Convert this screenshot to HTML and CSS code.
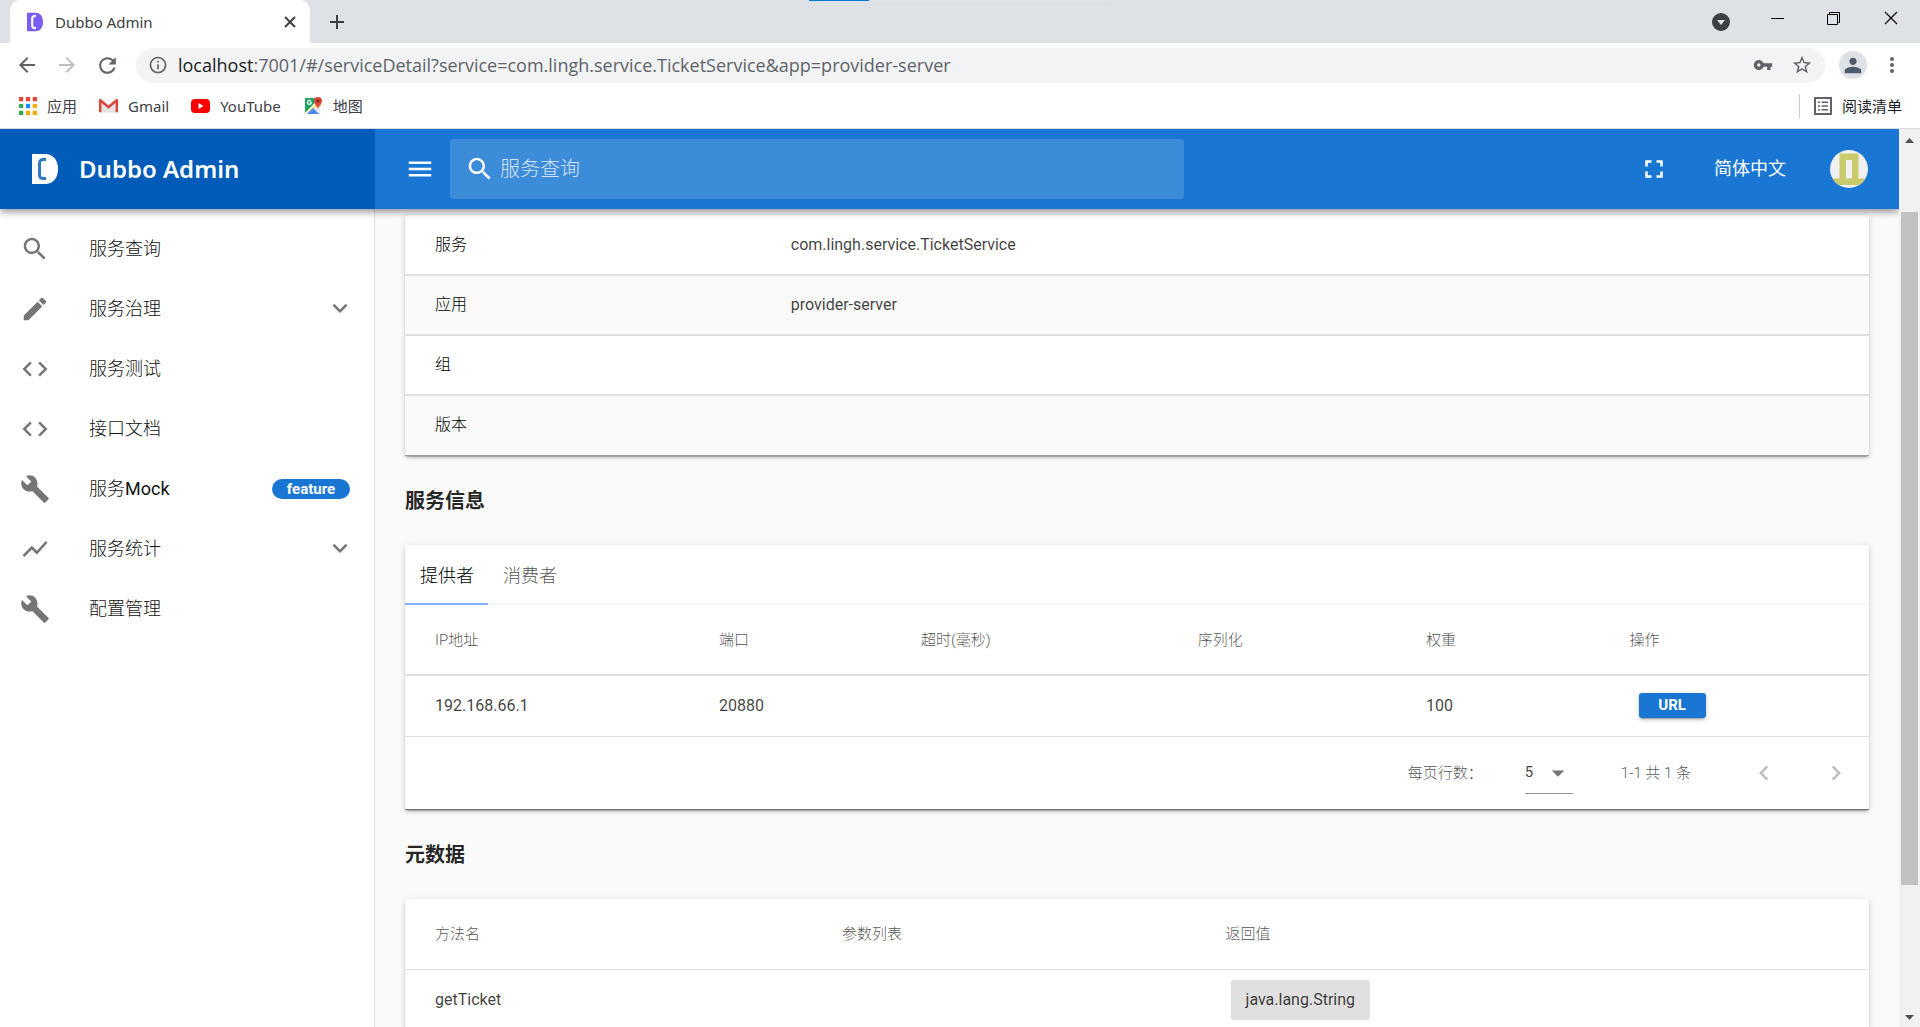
FILE: index.html
```html
<!DOCTYPE html>
<html lang="zh-CN">
<head>
<meta charset="utf-8">
<title>Dubbo Admin</title>
<link rel="stylesheet" href="styles.css">
</head>
<body>
<svg class="sprite" aria-hidden="true">
  <symbol id="i-search" viewBox="0 0 24 24"><path d="M15.5 14h-.79l-.28-.27C15.41 12.59 16 11.11 16 9.5 16 5.91 13.09 3 9.5 3S3 5.91 3 9.5 5.91 16 9.5 16c1.61 0 3.09-.59 4.23-1.57l.27.28v.79l5 4.99L20.49 19l-4.99-5zm-6 0C7.01 14 5 11.99 5 9.5S7.01 5 9.5 5 14 7.01 14 9.5 11.99 14 9.5 14z"/></symbol>
  <symbol id="i-edit" viewBox="0 0 24 24"><path d="M3 17.25V21h3.75L17.81 9.94l-3.75-3.75L3 17.25zM20.71 7.04c.39-.39.39-1.02 0-1.41l-2.34-2.34c-.39-.39-1.02-.39-1.41 0l-1.83 1.83 3.75 3.75 1.83-1.83z"/></symbol>
  <symbol id="i-code" viewBox="0 0 24 24"><path d="M9.4 16.6L4.8 12l4.6-4.6L8 6l-6 6 6 6 1.4-1.4zm5.2 0l4.6-4.6-4.6-4.6L16 6l6 6-6 6-1.4-1.4z"/></symbol>
  <symbol id="i-build" viewBox="0 0 24 24"><path d="M22.7 19l-9.1-9.1c.9-2.3.4-5-1.5-6.9-2-2-5-2.4-7.4-1.3L9 6 6 9 1.6 4.7C.4 7.1.9 10.1 2.9 12.1c1.9 1.9 4.6 2.4 6.9 1.5l9.1 9.1c.4.4 1 .4 1.4 0l2.3-2.3c.5-.4.5-1.1.1-1.4z"/></symbol>
  <symbol id="i-chart" viewBox="0 0 24 24"><path d="M3.5 18.49l6-6.01 4 4L22 6.92l-1.41-1.41-7.09 7.97-4-4L2 16.99z"/></symbol>
  <symbol id="i-menu" viewBox="0 0 24 24"><path d="M3 18h18v-2H3v2zm0-5h18v-2H3v2zm0-7v2h18V6H3z"/></symbol>
  <symbol id="i-down" viewBox="0 0 24 24"><path d="M7.41 7.84L12 12.42l4.59-4.58L18 9.25l-6 6-6-6z"/></symbol>
  <symbol id="i-left" viewBox="0 0 24 24"><path d="M15.41 7.41L14 6l-6 6 6 6 1.41-1.41L10.83 12z"/></symbol>
  <symbol id="i-right" viewBox="0 0 24 24"><path d="M10 6L8.59 7.41 13.17 12l-4.58 4.59L10 18l6-6z"/></symbol>
  <symbol id="i-full" viewBox="0 0 24 24"><path d="M7 14H5v5h5v-2H7v-3zm-2-4h2V7h3V5H5v5zm12 7h-3v2h5v-5h-2v3zM14 5v2h3v3h2V5h-5z"/></symbol>
  <symbol id="i-drop" viewBox="0 0 24 24"><path d="M7 10l5 5 5-5z"/></symbol>
</svg>

<div class="tabstrip">
  <div class="progress"></div>
  <div class="tab">
    <svg class="favicon" width="16" height="20" viewBox="0 0 26 30"><path fill="#7b5cf5" d="M0 0h14c8 0 12 7 12 15s-4 15-12 15H0z"/><path fill="none" stroke="#fff" stroke-width="3.5" d="M14.500 5c-4 0-6 1-6 4v12c0 3 2 4 6 4"/></svg>
    <span class="tab-title">Dubbo Admin</span>
    <button class="bare" aria-label="关闭标签页"><svg width="20" height="20" viewBox="0 0 20 20"><path stroke="#3c4043" stroke-width="2" d="M5 5l10 10M15 5L5 15"/></svg></button>
  </div>
  <button class="bare newtab" aria-label="新标签页"><svg width="20" height="20" viewBox="0 0 20 20"><path stroke="#3c4043" stroke-width="2" d="M10 3v14M3 10h14"/></svg></button>
  <div class="winctl">
    <button class="bare wc-list" aria-label="搜索标签页"><svg width="20" height="20" viewBox="0 0 20 20"><circle cx="11" cy="10" r="9" fill="#3c4043"/><path fill="#dee1e6" d="M7 8h8l-4 5z"/></svg></button>
    <button class="bare" aria-label="最小化"><svg width="20" height="20" viewBox="0 0 20 20"><path fill="#000" d="M4 9h13v1H4z"/></svg></button>
    <button class="bare" aria-label="还原"><svg width="20" height="20" viewBox="0 0 20 20"><path fill="none" stroke="#000" d="M3.500 5.500h10v10h-10zM5.500 5.500v-2h10v10h-2"/></svg></button>
    <button class="bare" aria-label="关闭"><svg width="20" height="20" viewBox="0 0 20 20"><path stroke="#000" stroke-width="1.200" d="M4 3l12 12M16 3L4 15"/></svg></button>
  </div>
</div>

<div class="toolbar">
  <button class="bare" aria-label="后退"><svg width="24" height="24" viewBox="0 0 24 24" fill="#5f6368"><path d="M20 11H7.83l5.59-5.59L12 4l-8 8 8 8 1.410-1.410L7.830 13H20z"/></svg></button>
  <button class="bare" aria-label="前进"><svg width="24" height="24" viewBox="0 0 24 24" fill="#bdc0c3"><path d="M4 11h12.170l-5.590-5.590L12 4l8 8-8 8-1.410-1.410L16.170 13H4z"/></svg></button>
  <button class="bare" aria-label="重新加载"><svg width="25" height="25" viewBox="0 0 24 24" fill="#5f6368"><path d="M17.650 6.350C16.200 4.900 14.210 4 12 4c-4.420 0-7.990 3.580-7.990 8s3.570 8 7.990 8c3.730 0 6.840-2.550 7.730-6h-2.080c-.82 2.330-3.040 4-5.650 4-3.310 0-6-2.690-6-6s2.690-6 6-6c1.660 0 3.140.69 4.220 1.780L13 11h7V4z"/></svg></button>
  <div class="omnibox">
    <svg width="20" height="20" viewBox="0 0 24 24" fill="#5f6368"><path d="M11 7h2v2h-2zm0 4h2v6h-2zm1-9C6.480 2 2 6.480 2 12s4.480 10 10 10 10-4.480 10-10S17.520 2 12 2zm0 18c-4.410 0-8-3.590-8-8s3.590-8 8-8 8 3.590 8 8-3.590 8-8 8z"/></svg>
    <span class="url"><span class="host">localhost</span>:7001/#/serviceDetail?service=com.lingh.service.TicketService&amp;app=provider-server</span>
    <svg width="20" height="20" viewBox="0 0 24 24" fill="#5f6368"><path d="M12.650 10C11.830 7.670 9.610 6 7 6c-3.310 0-6 2.690-6 6s2.690 6 6 6c2.610 0 4.830-1.670 5.650-4H17v4h4v-4h2v-4zM7 14c-1.100 0-2-.9-2-2s.9-2 2-2 2 .9 2 2-.9 2-2 2z"/></svg>
    <svg width="22" height="22" viewBox="0 0 24 24" fill="#5f6368"><path d="M22 9.240l-7.190-.62L12 2 9.190 8.630 2 9.240l5.460 4.730L5.820 21 12 17.270 18.180 21l-1.630-7.030zM12 15.400l-3.760 2.270 1-4.280-3.320-2.880 4.380-.38L12 6.100l1.710 4.040 4.380.38-3.320 2.880 1 4.280z"/></svg>
  </div>
  <button class="bare profile" aria-label="个人资料"><svg width="22" height="22" viewBox="0 0 24 24" fill="#4f5b6c"><path d="M12 12c2.210 0 4-1.790 4-4s-1.790-4-4-4-4 1.790-4 4 1.790 4 4 4zm0 2c-2.670 0-9 1.340-9 4v3h18v-3c0-2.660-6.330-4-9-4z"/></svg></button>
  <button class="bare" aria-label="更多"><svg width="24" height="24" viewBox="0 0 24 24" fill="#5f6368"><circle cx="12" cy="6" r="2"/><circle cx="12" cy="12" r="2"/><circle cx="12" cy="18" r="2"/></svg></button>
</div>

<nav class="bookmarks">
  <a href="#apps"><svg width="18" height="18" viewBox="0 0 17 17"><path fill="#ea4335" d="M0 0h4v4H0zM6.500 0h4v4h-4zM13 0h4v4h-4z"/><path fill="#34a853" d="M0 6.500h4v4H0zM0 13h4v4H0z"/><path fill="#1a8cff" d="M6.500 6.500h4v4h-4z"/><path fill="#fbab00" d="M13 6.500h4v4h-4zM6.500 13h4v4h-4zM13 13h4v4h-4z"/></svg>应用</a>
  <a href="#gmail"><svg width="19" height="16" viewBox="0 0 20 16"><path fill="#e3e3e3" d="M1 1h18v14H1z"/><path fill="#f5f5f5" d="M3 1h14l-7 6z"/><path fill="#db4437" d="M0 2C0 .5 1.500.5 2 1l8 6.500L18 1c.5-.5 2-.5 2 1v12.500h-2.500V4.500L10 11 2.500 4.500v10H0z"/></svg>Gmail</a>
  <a href="#youtube"><svg width="19" height="20" viewBox="0 0 19 20"><rect x="0" y="3" width="19" height="14" rx="4" fill="#f00"/><path fill="#fff" d="M7.500 7v6l5-3z"/></svg>YouTube</a>
  <a href="#maps"><svg width="20" height="20" viewBox="0 0 20 20"><path fill="#1fa463" d="M2 2h14L2 18z"/><path fill="#f5d24b" d="M2 17L15 4l3 4v2l-8 5z"/><path fill="#e8e8e8" d="M17 9v9h-2l-5-6z"/><path fill="#4a89f3" d="M4 18l6-6 6 6z"/><path fill="none" stroke="#fff" stroke-width="1.200" d="M2 18L14 6M8 5.300a2 2 0 1 0 .3 1.500H6.500"/><path fill="#db4437" d="M15 1a4 4 0 0 1 4 4c0 3-3 4-4 8-1-4-4-5-4-8a4 4 0 0 1 4-4z"/><circle cx="15" cy="5" r="1.400" fill="#7b231c"/></svg>地图</a>
  <a class="reading" href="#reading"><svg width="18" height="18" viewBox="0 0 18 18"><path fill="none" stroke="#5f6368" stroke-width="2" d="M1 1h16v16H1z"/><path fill="#5f6368" d="M4 4.500h2v1.500H4zM7.500 4.500H14v1.500H7.500zM4 8.200h2v1.500H4zM7.500 8.200H14v1.500H7.500zM4 12h2v1.500H4zM7.500 12H14v1.500H7.500z"/></svg>阅读清单</a>
</nav>

<div class="viewport">
  <div class="app">
    <header class="appbar">
      <div class="brand">
        <svg width="28" height="30" viewBox="0 0 28 30"><path fill="#fff" d="M1 0h13c9 0 13 7 13 15s-4 15-13 15H1z"/><path fill="none" stroke="#2f78c2" stroke-width="3" d="M15 5.500h-2.500c-3 0-4 1-4 4v11c0 3 1 4 4 4H15"/></svg>
        <span>Dubbo Admin</span>
      </div>
      <button class="bare" aria-label="菜单"><svg class="ic" aria-hidden="true"><use href="#i-menu"/></svg></button>
      <label class="search"><svg class="ic" aria-hidden="true"><use href="#i-search"/></svg><input type="text" placeholder="服务查询" aria-label="服务查询"></label>
      <div class="actions">
        <button class="bare" aria-label="全屏"><svg class="ic" aria-hidden="true"><use href="#i-full"/></svg></button>
        <button class="bare lang">简体中文</button>
        <button class="bare avatar" aria-label="账户"><svg width="38" height="38" viewBox="0 0 38 38"><clipPath id="round"><circle cx="19" cy="19" r="19"/></clipPath><g clip-path="url(#round)"><path fill="#f0f0f0" d="M0 0h38v38H0z"/><path fill="#c9cb6c" d="M9.500 3.500h19v25H38v6.500H0v-6.500h9.500z"/><path fill="#f0f0f0" d="M16 10h6v18.500h-6z"/></g></svg></button>
      </div>
    </header>
    <div class="body">
      <nav class="sidebar">
        <a href="#/service"><svg class="ic"><use href="#i-search"/></svg><span>服务查询</span></a>
        <a href="#/governance"><svg class="ic"><use href="#i-edit"/></svg><span>服务治理</span><svg class="ic"><use href="#i-down"/></svg></a>
        <a href="#/test"><svg class="ic"><use href="#i-code"/></svg><span>服务测试</span></a>
        <a href="#/apiDocs"><svg class="ic"><use href="#i-code"/></svg><span>接口文档</span></a>
        <a href="#/mock"><svg class="ic"><use href="#i-build"/></svg><span>服务<b class="latin">Mock</b></span><em class="badge">feature</em></a>
        <a href="#/metrics"><svg class="ic"><use href="#i-chart"/></svg><span>服务统计</span><svg class="ic"><use href="#i-down"/></svg></a>
        <a href="#/management"><svg class="ic"><use href="#i-build"/></svg><span>配置管理</span></a>
      </nav>
      <main class="content">
        <table class="card basic">
          <tr><th scope="row">服务</th><td>com.lingh.service.TicketService</td></tr>
          <tr><th scope="row">应用</th><td>provider-server</td></tr>
          <tr><th scope="row">组</th><td></td></tr>
          <tr><th scope="row">版本</th><td></td></tr>
        </table>
        <h3>服务信息</h3>
        <section class="card">
          <div class="tabs" role="tablist">
            <button class="bare active" role="tab" aria-selected="true">提供者</button>
            <button class="bare" role="tab" aria-selected="false">消费者</button>
          </div>
          <table class="grid providers">
            <thead><tr><th>IP地址</th><th>端口</th><th>超时(毫秒)</th><th>序列化</th><th>权重</th><th>操作</th></tr></thead>
            <tbody><tr><td>192.168.66.1</td><td>20880</td><td></td><td></td><td>100</td><td><button class="url-btn">URL</button></td></tr></tbody>
          </table>
          <div class="pager">
            <label for="rows">每页行数：</label>
            <span class="select"><select id="rows"><option>5</option><option>10</option></select><svg class="ic" aria-hidden="true"><use href="#i-drop"/></svg></span>
            <span class="range">1-1 共 1 条</span>
            <button class="bare" aria-label="上一页" disabled><svg class="ic" aria-hidden="true"><use href="#i-left"/></svg></button>
            <button class="bare" aria-label="下一页" disabled><svg class="ic" aria-hidden="true"><use href="#i-right"/></svg></button>
          </div>
        </section>
        <h3>元数据</h3>
        <section class="card">
          <table class="grid methods">
            <thead><tr><th>方法名</th><th>参数列表</th><th>返回值</th></tr></thead>
            <tbody><tr><td>getTicket</td><td></td><td><span class="chip">java.lang.String</span></td></tr></tbody>
          </table>
        </section>
      </main>
    </div>
  </div>
  <div class="scrollbar" aria-hidden="true">
    <svg width="21" height="21" viewBox="0 0 21 21"><path fill="#505050" d="M6 14h9l-4.500-5z"/></svg>
    <div class="gap-top"></div>
    <div class="thumb"></div>
    <div class="gap-bottom"></div>
    <svg width="21" height="21" viewBox="0 0 21 21"><path fill="#505050" d="M6 9h9l-4.500 5z"/></svg>
  </div>
</div>
</body>
</html>
```

FILE: styles.css
```css
* { box-sizing: border-box; }
html, body { height: 100%; }
body {
  margin: 0;
  display: flex;
  flex-direction: column;
  overflow: hidden;
  background: #fff;
  font: 16px/24px Roboto, "Noto Sans CJK SC", sans-serif;
  color: rgba(0, 0, 0, .87);
}
svg { display: block; flex: none; }
.sprite { position: absolute; width: 0; height: 0; }
.ic { width: 30px; height: 30px; fill: currentColor; }
.bare { margin: 0; padding: 0; border: 0; background: none; font: inherit; color: inherit; }
a { color: inherit; text-decoration: none; }

/* Browser chrome */
.tabstrip, .toolbar, .bookmarks { flex: none; display: flex; align-items: center; font-family: "Noto Sans", "Noto Sans CJK SC", sans-serif; }
.tabstrip { position: relative; height: 43px; padding-left: 10px; background: #dee1e6; }
.progress {
  position: absolute; top: 0; left: 809px; width: 301px; height: 1px;
  background: linear-gradient(90deg, #0078d7 60px, #e5e5e5 60px);
}
.tab {
  display: flex; align-items: center;
  width: 300px; height: 43px; padding: 0 10px 0 17px;
  background: #fff; border-radius: 10px 10px 0 0;
}
.tab-title { flex: 1; padding-left: 12px; font-size: 15px; color: #3c4043; }
.newtab { margin-left: 17px; }
.winctl { display: flex; gap: 37px; margin-left: auto; padding-right: 19px; }
.wc-list { align-self: center; padding-top: 1px; }
.winctl .bare + .bare { padding-bottom: 6px; }
.toolbar { height: 44px; padding: 0 16px 0 15px; gap: 16px; }
.omnibox {
  flex: 1; display: flex; align-items: center; gap: 18px;
  height: 35px; padding: 0 12px; border-radius: 18px; background: #f1f3f4;
  font-family: "Open Sans", sans-serif; font-size: 18px; color: #5f6368;
}
.url { flex: 1; margin-left: -8px; white-space: nowrap; }
.host { color: #202124; }
.profile { display: grid; place-items: center; width: 28px; height: 28px; margin: 0 -3px 0 -2px; border-radius: 50%; background: #dee1e6; }
.bookmarks { height: 42px; gap: 22px; padding: 0 18px 4px 19px; border-bottom: 1px solid #dadce0; font-size: 15px; color: #3c4043; }
.bookmarks a { display: flex; align-items: center; gap: 10px; }
.bookmarks .reading { margin-left: auto; padding-left: 14px; border-left: 1px solid #c8cacd; color: #202124; }

/* Application shell */
.viewport { flex: 1; min-height: 0; display: flex; }
.app { flex: 1; min-width: 0; display: flex; flex-direction: column; overflow: hidden; background: #fafafa; }
.appbar {
  position: relative; z-index: 1; flex: none;
  display: flex; align-items: center;
  height: 80px; padding-right: 31px;
  background: #1976d2; color: #fff;
  box-shadow: 0 3px 5px -1px rgba(0, 0, 0, .2), 0 5px 6px rgba(0, 0, 0, .14), 0 1px 12px rgba(0, 0, 0, .12);
}
.brand {
  display: flex; align-items: center; gap: 20px;
  width: 375px; height: 80px; margin-right: 30px; padding-left: 31px;
  background: #005cb8; font: 600 24px/32px "Noto Sans", sans-serif;
}
.search {
  flex: 0 1 734px; display: flex; align-items: center; gap: 5px;
  height: 60px; margin-left: 15px; padding-left: 15px;
  border-radius: 3px; background: rgba(255, 255, 255, .16);
}
.search input { flex: 1; min-width: 0; padding: 0; border: 0; outline: 0; background: none; font: 300 20px/30px Roboto, "Noto Sans CJK SC", sans-serif; color: #fff; }
.search input::placeholder { color: rgba(255, 255, 255, .8); opacity: 1; }
.actions { display: flex; align-items: center; margin-left: auto; }
.lang { margin: 0 44px 0 45px; font-size: 18px; }
.body { flex: 1; min-height: 0; display: flex; }
.sidebar { flex: none; width: 375px; padding-top: 10px; border-right: 1px solid #e0e0e0; background: #fff; font-size: 18px; font-weight: 300; color: #111; }
.sidebar a { display: flex; align-items: center; height: 60px; padding: 0 19px 0 20px; }
.sidebar span { flex: 1; padding-left: 39px; }
.sidebar .ic { color: rgba(0, 0, 0, .54); }
.latin { font-weight: 400; }
.badge { width: 78px; height: 20px; margin-right: 5px; border-radius: 10px; background: #1976d2; color: #fff; font: 700 15px/20px Roboto, sans-serif; text-align: center; }

/* Content */
.content { flex: 1; min-width: 0; padding: 6px 30px; }
.card { background: #fff; border-radius: 3px; box-shadow: 0 3px 1px -2px rgba(0, 0, 0, .2), 0 2px 3px rgba(0, 0, 0, .14), 0 1px 6px rgba(0, 0, 0, .12); }
table { width: 100%; border-collapse: collapse; table-layout: fixed; }
th, td { padding: 0 30px; text-align: left; font-weight: 400; }
td { color: rgba(0, 0, 0, .76); }
th { font-weight: 300; color: #000; }
.basic { border-bottom: 1px solid #a0a0a0; }
.basic tr { height: 60px; }
.basic tr:nth-child(even) { background: #f9f9f9; }
.basic tr + tr { border-top: 2px solid #e0e0e0; }
.basic th { width: 24.3%; }
h3 { margin: 30px 0 29px; font-size: 20px; line-height: 30px; font-weight: 700; }
.tabs { display: flex; height: 60px; border-bottom: 1px solid #f2f2f2; }
.tabs button { height: 60px; padding: 2px 14px 0 15px; font-size: 18px; font-weight: 300; color: rgba(0, 0, 0, .7); }
.tabs .active { border-bottom: 2px solid #82b1ff; padding-top: 4px; color: #000; }
.grid thead tr { height: 70px; border-bottom: 2px solid #e0e0e0; }
.grid tbody tr { height: 61px; }
.grid th { padding-top: 1px; font-size: 15px; color: rgba(0, 0, 0, .7); }
.methods thead tr { height: 71px; border-bottom-width: 1px; }
.providers th:nth-child(1) { width: 19.4%; }
.providers th:nth-child(2) { width: 13.8%; }
.providers th:nth-child(3) { width: 18.9%; }
.providers th:nth-child(4) { width: 15.6%; }
.providers th:nth-child(5) { width: 13.9%; }
.methods th:nth-child(1) { width: 27.8%; }
.methods th:nth-child(2) { width: 26.2%; }
.url-btn {
  display: block; width: 67px; height: 25px; margin-left: 9px; padding: 0;
  border: 0; border-radius: 3px; background: #1976d2; color: #fff;
  font: 700 15px/25px Roboto, sans-serif;
  box-shadow: 0 3px 1px -2px rgba(0, 0, 0, .2), 0 2px 3px rgba(0, 0, 0, .14), 0 1px 6px rgba(0, 0, 0, .12);
}
.pager {
  display: flex; align-items: center; justify-content: flex-end;
  height: 74px; padding-right: 18px;
  border-top: 1px solid #e0e0e0; border-bottom: 1px solid #757575;
  font-size: 15px; font-weight: 300; color: rgba(0, 0, 0, .7);
}
.select { position: relative; margin: 0 48px 0 42px; }
.select select {
  display: block; width: 48px; height: 42px; padding: 0;
  appearance: none; border: 0; border-bottom: 1px solid #949494; border-radius: 0;
  background: none; font: 15px/24px Roboto, sans-serif; color: rgba(0, 0, 0, .76);
}
.select .ic { position: absolute; right: 0; top: 6px; pointer-events: none; color: rgba(0, 0, 0, .54); }
.pager .bare { margin-left: 42px; color: rgba(0, 0, 0, .26); }
.pager .range + .bare { margin-left: 58px; }
.chip { display: inline-block; margin-left: 5px; padding: 0 15px; border-radius: 3px; background: #e0e0e0; line-height: 40px; }

/* Scrollbar */
.scrollbar { flex: none; display: flex; flex-direction: column; width: 21px; padding: 0 2px; background: #f1f1f1; align-items: center; }
.gap-top { flex: 62; }
.thumb { flex: 673; width: 17px; background: #c1c1c1; }
.gap-bottom { flex: 121; }
```
